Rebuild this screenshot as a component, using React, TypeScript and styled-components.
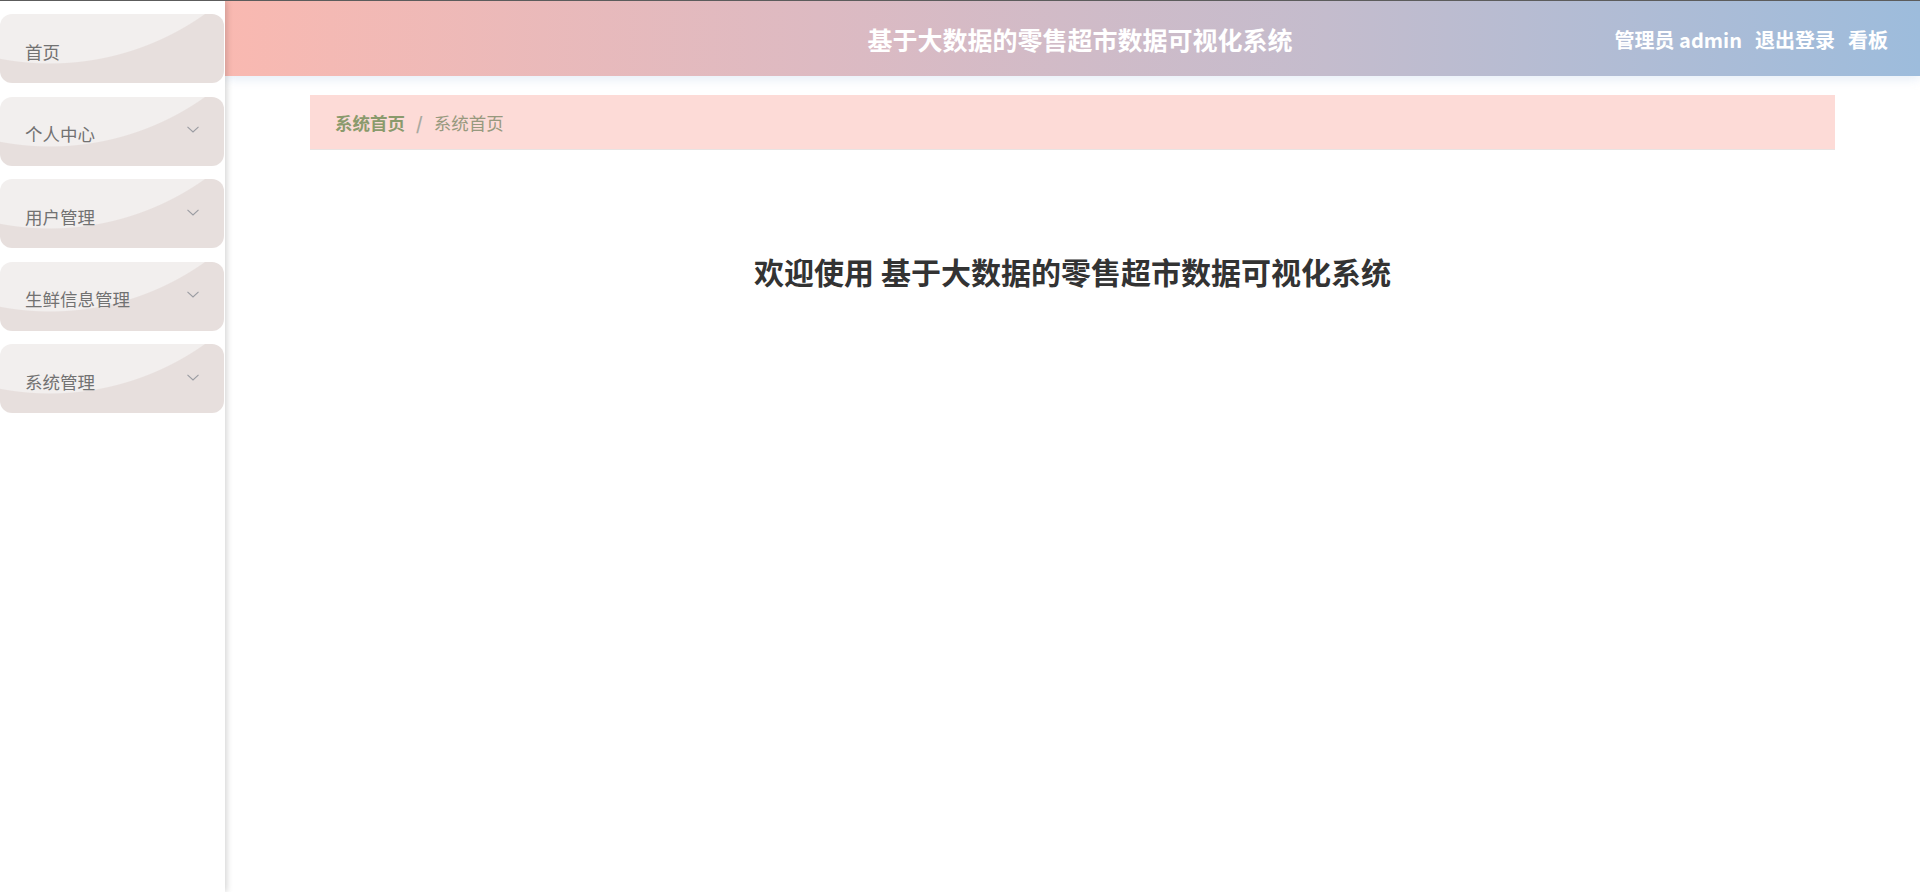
import React from "react";
import styled, { createGlobalStyle } from "styled-components";

const GlobalStyle = createGlobalStyle`
  html, body { margin: 0; padding: 0; background: #fff; }
  body {
    border-top: 1px solid #5c5c5c;
    font-family: "Noto Sans CJK SC", "Noto Sans", sans-serif;
  }
  * { box-sizing: border-box; }
`;

const Layout = styled.div`
  display: flex;
  min-height: 891px;
`;

const Sidebar = styled.aside`
  width: 225px;
  flex: 0 0 225px;
  background: #fff;
  padding-top: 13px;
  box-shadow: 2px 0 6px rgba(0, 0, 0, 0.16);
  position: relative;
  z-index: 3;
`;

const MenuItem = styled.div`
  width: 224px;
  height: 69px;
  margin-bottom: 13.5px;
  border-radius: 12px;
  background: radial-gradient(circle 268px at 50px -218px, #f2efee 99.6%, #e7dfdd 100%);
  display: flex;
  align-items: center;
  justify-content: space-between;
  padding: 5px 25px 0 25px;
  font-size: 17.5px;
  color: #727272;
  cursor: pointer;
`;

const Chevron = styled.svg`
  width: 12px;
  height: 7px;
  margin-top: -8px;
  flex: none;
`;

const Main = styled.div`
  flex: 1;
  display: flex;
  flex-direction: column;
  min-width: 0;
`;

const Header = styled.header`
  height: 75px;
  background: linear-gradient(90deg, #f9b9b1 0%, #ddbac2 35%, #c4bccd 65%, #9dbcdc 100%);
  box-shadow: 0 3px 10px rgba(160, 190, 225, 0.28);
  display: grid;
  grid-template-columns: 1fr auto 1fr;
  align-items: center;
  padding: 0 32px 0 47px;
  color: #fff;
  position: relative;
  z-index: 2;
`;

const Title = styled.h1`
  margin: 0;
  font-size: 25px;
  font-weight: 700;
  color: #fff;
`;

const HeaderRight = styled.div`
  justify-self: end;
  display: flex;
  gap: 13px;
  font-size: 20px;
  font-weight: 700;
  margin-top: 2px;
`;

const HeaderLink = styled.span`
  cursor: pointer;
  white-space: nowrap;
`;

const Content = styled.main`
  padding: 19px 85px;
`;

const Breadcrumb = styled.nav`
  height: 55px;
  background: #fddbd7;
  border-bottom: 1px solid #e9e3e2;
  display: flex;
  align-items: center;
  padding-left: 25px;
  font-size: 17.5px;
`;

const Crumb = styled.span<{ $strong?: boolean }>`
  font-weight: ${(p) => (p.$strong ? 700 : 400)};
  color: ${(p) => (p.$strong ? "#8a9a6c" : "#97997e")};
`;

const Sep = styled.span`
  margin: 0 11px;
  color: #a9a9a0;
  font-weight: 700;
`;

const Welcome = styled.h2`
  margin: 101px 0 0;
  text-align: center;
  font-size: 30px;
  line-height: 40px;
  font-weight: 700;
  color: #333;
`;

const ArrowDown = () => (
  <Chevron viewBox="0 0 12 7" fill="none">
    <polyline points="0.5,0.8 6,6 11.5,0.8" stroke="#9a9ca2" strokeWidth="1.1" />
  </Chevron>
);

const menus = [
  { label: "首页", sub: false },
  { label: "个人中心", sub: true },
  { label: "用户管理", sub: true },
  { label: "生鲜信息管理", sub: true },
  { label: "系统管理", sub: true },
];

export default function App() {
  return (
    <>
      <GlobalStyle />
      <Layout>
        <Sidebar>
          {menus.map((m) => (
            <MenuItem key={m.label}>
              <span>{m.label}</span>
              {m.sub && <ArrowDown />}
            </MenuItem>
          ))}
        </Sidebar>
        <Main>
          <Header>
            <div />
            <Title>基于大数据的零售超市数据可视化系统</Title>
            <HeaderRight>
              <HeaderLink>管理员 admin</HeaderLink>
              <HeaderLink>退出登录</HeaderLink>
              <HeaderLink>看板</HeaderLink>
            </HeaderRight>
          </Header>
          <Content>
            <Breadcrumb>
              <Crumb $strong>系统首页</Crumb>
              <Sep>/</Sep>
              <Crumb>系统首页</Crumb>
            </Breadcrumb>
            <Welcome>欢迎使用 基于大数据的零售超市数据可视化系统</Welcome>
          </Content>
        </Main>
      </Layout>
    </>
  );
}
